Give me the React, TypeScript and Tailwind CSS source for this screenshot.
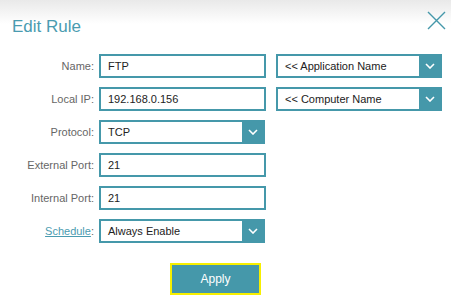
import React from "react";

const font = { fontFamily: '"Liberation Sans", Arial, sans-serif' };

function Chevron() {
  return (
    <svg width="10" height="6" viewBox="0 0 10 6" fill="none">
      <path d="M1 1 L5 5 L9 1" stroke="white" strokeWidth="1.6" />
    </svg>
  );
}

function Input({ value, w = "w-[167px]" }: { value: string; w?: string }) {
  return (
    <div className={`${w} h-[24px] border-2 border-[#4598aa] bg-white flex items-center pl-[7px] text-[11px] text-[#222]`}>
      {value}
    </div>
  );
}

function Select({ value, w }: { value: string; w: string }) {
  return (
    <div className={`${w} h-[24px] border-2 border-[#4598aa] bg-white flex items-center text-[11px] text-[#222]`}>
      <div className="flex-1 pl-[7px]">{value}</div>
      <div className="w-[21px] h-full bg-[#4598aa] flex items-center justify-center">
        <Chevron />
      </div>
    </div>
  );
}

function Label({ children }: { children: React.ReactNode }) {
  return (
    <div className="w-[94px] pr-[0px] text-right text-[11px] text-[#666] mr-[5px]">{children}</div>
  );
}

export default function App() {
  return (
    <div
      className="w-[451px] h-[302px] bg-[linear-gradient(to_bottom,#e9e9e9,#ffffff_24px)] overflow-hidden"
      style={font}
    >
      <div className="flex justify-between">
        <div className="pl-[12px] pt-[17px] text-[17px] leading-[20px] text-[#4a9bb0]">Edit Rule</div>
        <svg className="mt-[11px] mr-[5px]" width="19" height="19" viewBox="0 0 19 19" fill="none">
          <path d="M1 1 L18 18 M18 1 L1 18" stroke="#4598aa" strokeWidth="1.4" />
        </svg>
      </div>
      <div className="mt-[17px] flex flex-col gap-[9px]">
        <div className="flex items-center">
          <Label>Name:</Label>
          <Input value="FTP" />
          <div className="w-[10px]" />
          <Select value="<< Application Name" w="w-[166px]" />
        </div>
        <div className="flex items-center">
          <Label>Local IP:</Label>
          <Input value="192.168.0.156" />
          <div className="w-[10px]" />
          <Select value="<< Computer Name" w="w-[166px]" />
        </div>
        <div className="flex items-center">
          <Label>Protocol:</Label>
          <Select value="TCP" w="w-[166px]" />
        </div>
        <div className="flex items-center">
          <Label>External Port:</Label>
          <Input value="21" />
        </div>
        <div className="flex items-center">
          <Label>Internal Port:</Label>
          <Input value="21" />
        </div>
        <div className="flex items-center">
          <Label>
            <span className="text-[#4a9bb0] underline">Schedule</span>:
          </Label>
          <Select value="Always Enable" w="w-[166px]" />
        </div>
      </div>
      <div className="mt-[20px] ml-[170px] w-[91px] h-[32px] border-2 border-[#f7ef00] bg-[#4598aa] flex items-center justify-center text-white text-[12px]">
        Apply
      </div>
    </div>
  );
}
